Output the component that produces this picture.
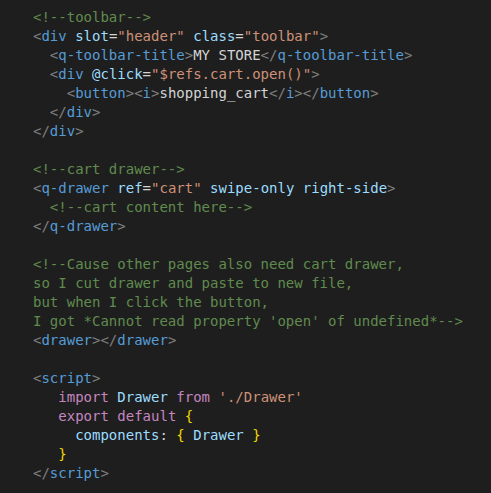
type Tok = [string, string];

const C = "text-[#608b4e]"; // comment
const P = "text-[#808080]"; // punctuation
const T = "text-[#569cd6]"; // tag
const A = "text-[#9cdcfe]"; // attr
const S = "text-[#ce9178]"; // string
const W = "text-[#d4d4d4]"; // plain
const K = "text-[#c586c0]"; // keyword
const Y = "text-[#f1d700]"; // brace

const lines: Tok[][] = [
  [["<!--toolbar-->", C]],
  [["<", P], ["div", T], [" ", W], ["slot", A], ["=", W], ['"header"', S], [" ", W], ["class", A], ["=", W], ['"toolbar"', S], [">", P]],
  [["  ", W], ["<", P], ["q-toolbar-title", T], [">", P], ["MY STORE", W], ["</", P], ["q-toolbar-title", T], [">", P]],
  [["  ", W], ["<", P], ["div", T], [" ", W], ["@click", A], ["=", W], ['"$refs.cart.open()"', S], [">", P]],
  [["    ", W], ["<", P], ["button", T], ["><", P], ["i", T], [">", P], ["shopping_cart", W], ["</", P], ["i", T], ["></", P], ["button", T], [">", P]],
  [["  ", W], ["</", P], ["div", T], [">", P]],
  [["</", P], ["div", T], [">", P]],
  [],
  [["<!--cart drawer-->", C]],
  [["<", P], ["q-drawer", T], [" ", W], ["ref", A], ["=", W], ['"cart"', S], [" ", W], ["swipe-only", A], [" ", W], ["right-side", A], [">", P]],
  [["  ", W], ["<!--cart content here-->", C]],
  [["</", P], ["q-drawer", T], [">", P]],
  [],
  [["<!--Cause other pages also need cart drawer,", C]],
  [["so I cut drawer and paste to new file,", C]],
  [["but when I click the button,", C]],
  [["I got *Cannot read property 'open' of undefined*-->", C]],
  [["<", P], ["drawer", T], ["></", P], ["drawer", T], [">", P]],
  [],
  [["<", P], ["script", T], [">", P]],
  [["   ", W], ["import", K], [" ", W], ["Drawer", A], [" ", W], ["from", K], [" ", W], ["'./Drawer'", S]],
  [["   ", W], ["export", K], [" ", W], ["default", K], [" ", W], ["{", Y]],
  [["     ", W], ["components", A], [":", W], [" ", W], ["{", Y], [" ", W], ["Drawer", A], [" ", W], ["}", Y]],
  [["   ", W], ["}", Y]],
  [["</", P], ["script", T], [">", P]],
];

export default function App() {
  return (
    <div className="min-h-screen w-full bg-[#1e1e1e]">
      <pre className="pl-[33px] pt-[8px] font-['DejaVu_Sans_Mono',monospace] text-[14px] leading-[19px] text-[#d4d4d4]">
        {lines.map((line, i) => (
          <div key={i} className="h-[19px] whitespace-pre">
            {line.map(([text, cls], j) => (
              <span key={j} className={cls}>
                {text}
              </span>
            ))}
          </div>
        ))}
      </pre>
    </div>
  );
}
